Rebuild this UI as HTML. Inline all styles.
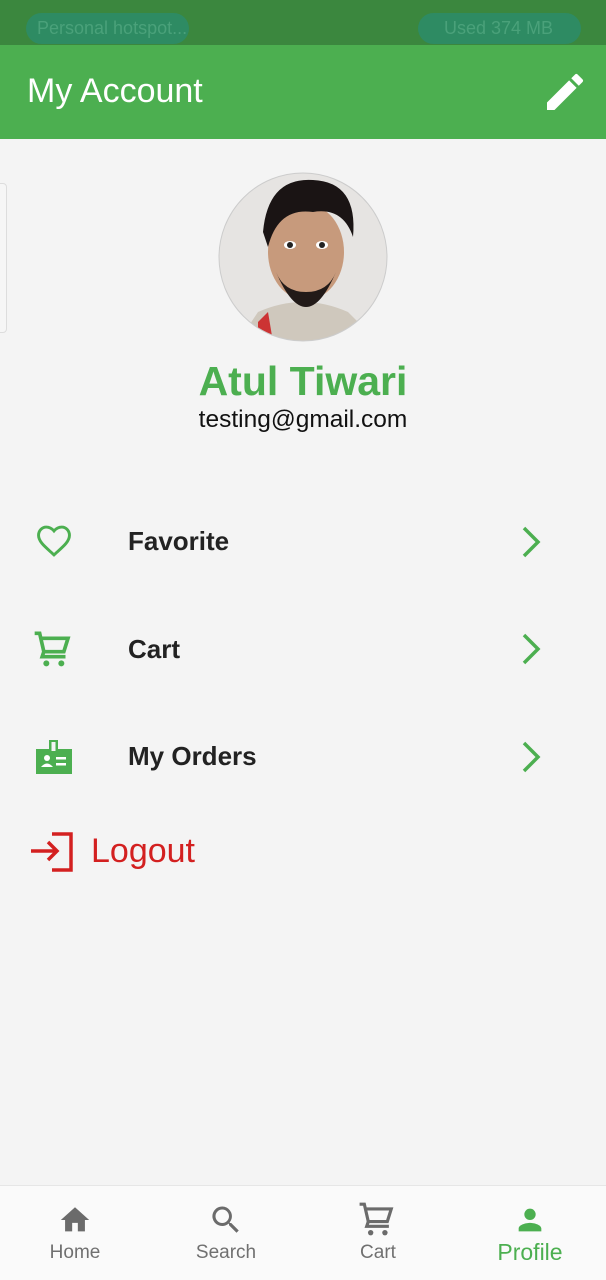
<!DOCTYPE html>
<html><head><meta charset="utf-8"><style>
*{margin:0;padding:0;box-sizing:border-box}
body{width:606px;height:1280px;background:#f4f4f4;font-family:"Liberation Sans",Roboto,sans-serif;position:relative;overflow:hidden}
.abs{position:absolute}
.pill{position:absolute;top:13px;height:31px;border-radius:16px;background:#2e8b63;color:#4aa17a;font-size:18px;line-height:31px;padding-left:11px}
.item{position:absolute;left:128px;font-size:26px;font-weight:bold;color:#222}
.nav{position:absolute;top:1242px;font-size:19px;color:#707070;text-align:center;width:120px}
</style></head><body>
<div class="abs" style="left:0;top:0;width:606px;height:45px;background:#3b873e"></div>
<div class="pill" style="left:26px;width:163px">Personal hotspot...</div>
<div class="pill" style="left:418px;width:163px;padding-left:26px">Used 374 MB</div>
<div class="abs" style="left:0;top:45px;width:606px;height:94px;background:#4caf50"></div>
<div class="abs" style="left:27px;top:72px;font-size:34px;color:#fff">My Account</div>
<svg class="abs" style="left:541px;top:68px" width="48" height="48" viewBox="0 0 24 24"><path fill="#fff" d="M3 17.25V21h3.75L17.81 9.94l-3.75-3.75L3 17.25zM20.71 7.04a1 1 0 0 0 0-1.41l-2.34-2.34a1 1 0 0 0-1.41 0l-1.83 1.83 3.75 3.75 1.83-1.83z"/></svg>
<div class="abs" style="left:-8px;top:183px;width:15px;height:150px;border:1px solid #ddd;border-radius:4px;background:#f6f6f6"></div>
<svg class="abs" style="left:218px;top:172px" width="170" height="170" viewBox="0 0 170 170">
<defs><clipPath id="c"><circle cx="85" cy="85" r="84"/></clipPath></defs>
<g clip-path="url(#c)">
<rect width="170" height="170" fill="#e6e4e2"/>
<path d="M20 170 L40 140 Q85 120 130 140 L160 170Z" fill="#cfc8bd"/>
<path d="M40 150 L50 140 L55 170 L40 170Z" fill="#c33"/>
<ellipse cx="88" cy="80" rx="38" ry="48" fill="#c79a7c"/>
<path d="M45 60 Q50 5 95 8 Q140 10 135 65 Q125 35 95 40 Q60 35 50 75Z" fill="#1a1414"/>
<path d="M58 100 Q88 170 118 100 Q110 120 88 120 Q66 120 58 100Z" fill="#221a18"/>
<ellipse cx="72" cy="73" rx="6" ry="4" fill="#fff"/><circle cx="72" cy="73" r="3" fill="#222"/>
<ellipse cx="104" cy="73" rx="6" ry="4" fill="#fff"/><circle cx="104" cy="73" r="3" fill="#222"/>
</g>
<circle cx="85" cy="85" r="84" fill="none" stroke="#ccc" stroke-width="1"/>
</svg>
<div class="abs" style="left:0;width:606px;top:358px;text-align:center;font-size:41px;font-weight:bold;color:#4caf50">Atul Tiwari</div>
<div class="abs" style="left:0;width:606px;top:406px;text-align:center;font-size:24.5px;color:#111">testing@gmail.com</div>

<svg class="abs" style="left:35px;top:524px" width="38" height="34" viewBox="0 0 24 22"><path fill="none" stroke="#4caf50" stroke-width="1.9" d="M12 20l-1.3-1.2C5.8 14.4 2 11.3 2 7.3 2 4.4 4.2 2 7 2c1.9 0 3.7 1 5 2.5C13.3 3 15.1 2 17 2c2.8 0 5 2.4 5 5.3 0 4-3.8 7.1-8.7 11.5z"/></svg>
<div class="item" style="top:526px">Favorite</div>
<svg class="abs" style="left:33px;top:630px" width="40" height="40" viewBox="0 0 24 24"><g fill="none" stroke="#4caf50" stroke-width="2.2"><path d="M1 2h3l2.5 11h12L21 5H5.5"/><path d="M6.5 13l-1 3h14"/></g><circle cx="8" cy="20" r="1.8" fill="#4caf50"/><circle cx="17" cy="20" r="1.8" fill="#4caf50"/></svg>
<div class="item" style="top:634px">Cart</div>
<svg class="abs" style="left:36px;top:740px" width="36" height="34" viewBox="0 0 36 34"><rect x="0" y="9" width="36" height="25" fill="#4caf50"/><rect x="13" y="0" width="9" height="12" fill="#4caf50"/><rect x="15.5" y="2" width="4" height="9" fill="#f4f4f4"/><circle cx="11" cy="18" r="3" fill="#fff"/><path d="M5 27q6-7 12 0z" fill="#fff"/><rect x="20" y="17" width="10" height="2.5" fill="#fff"/><rect x="20" y="23" width="10" height="2.5" fill="#fff"/></svg>
<div class="item" style="top:741px">My Orders</div>
<svg class="abs" style="left:518px;top:525px" width="28" height="34" viewBox="0 0 28 34"><path d="M6 3l14 14L6 31" fill="none" stroke="#4caf50" stroke-width="3.5"/></svg>
<svg class="abs" style="left:518px;top:632px" width="28" height="34" viewBox="0 0 28 34"><path d="M6 3l14 14L6 31" fill="none" stroke="#4caf50" stroke-width="3.5"/></svg>
<svg class="abs" style="left:518px;top:740px" width="28" height="34" viewBox="0 0 28 34"><path d="M6 3l14 14L6 31" fill="none" stroke="#4caf50" stroke-width="3.5"/></svg>
<svg class="abs" style="left:30px;top:832px" width="45" height="40" viewBox="0 0 45 40"><g fill="none" stroke="#d32020" stroke-width="3.5"><path d="M22 2h19v36H22"/><path d="M1 19h26M18 10l9 9-9 9"/></g></svg>
<div class="abs" style="left:91px;top:832px;font-size:34px;color:#d32020">Logout</div>

<div class="abs" style="left:0;top:1185px;width:606px;height:95px;background:#fafafa;border-top:1px solid #e6e6e6"></div>
<svg class="abs" style="left:57px;top:1203px" width="36" height="34" viewBox="0 0 24 24"><path fill="#6b6b6b" d="M10 20v-6h4v6h5v-8h3L12 3 2 12h3v8z"/></svg>
<svg class="abs" style="left:208px;top:1202px" width="36" height="36" viewBox="0 0 24 24"><path fill="#6b6b6b" d="M15.5 14h-.8l-.3-.3A6.5 6.5 0 1 0 9.5 16c1.6 0 3.1-.6 4.2-1.6l.3.3v.8l5 5 1.5-1.5-5-5zm-6 0C7 14 5 12 5 9.5S7 5 9.5 5 14 7 14 9.5 12 14 9.5 14z"/></svg>
<svg class="abs" style="left:358px;top:1201px" width="38" height="38" viewBox="0 0 24 24"><g fill="none" stroke="#6b6b6b" stroke-width="2"><path d="M1 2h3l2.5 11h12L21 5H5.5"/><path d="M6.5 13l-1 3h14"/></g><circle cx="8" cy="20" r="1.7" fill="#6b6b6b"/><circle cx="17" cy="20" r="1.7" fill="#6b6b6b"/></svg>
<svg class="abs" style="left:512px;top:1203px" width="36" height="34" viewBox="0 0 24 24"><path fill="#4caf50" d="M12 12a4 4 0 1 0 0-8 4 4 0 0 0 0 8zm0 2c-2.7 0-8 1.3-8 4v2h16v-2c0-2.7-5.3-4-8-4z"/></svg>
<div class="nav" style="left:15px">Home</div>
<div class="nav" style="left:166px">Search</div>
<div class="nav" style="left:318px">Cart</div>
<div class="nav" style="left:470px;top:1239px;font-size:23px;color:#4caf50">Profile</div>
</body></html>
